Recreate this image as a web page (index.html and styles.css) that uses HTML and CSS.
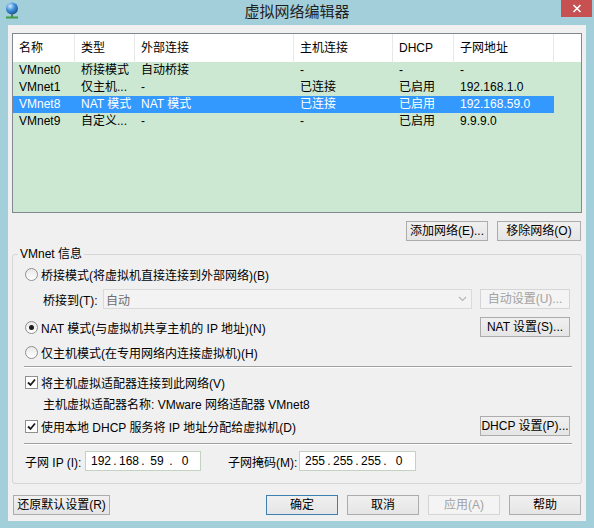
FILE: index.html
```html
<!DOCTYPE html>
<html lang="zh-CN">
	<head>
		<meta charset="utf-8">
		<link rel="stylesheet" href="styles.css">
	</head>

	<body>
		<div class="window">
			<div class="titlebar">
				<div class="tb-left">
					<svg class="app-icon" width="14" height="17" viewBox="0 0 14 17">
						<defs>
							<radialGradient id="globe" cx="0.35" cy="0.3" r="0.75">
								<stop offset="0" stop-color="#cfe8ff"/>
								<stop offset="0.5" stop-color="#3f8fd8"/>
								<stop offset="1" stop-color="#1a4f95"/>
							</radialGradient>
						</defs>
						<circle cx="7" cy="6.5" r="6" fill="url(#globe)"/>
						<rect x="6" y="12" width="2" height="3" fill="#5a7a5a"/>
						<rect x="1" y="14.5" width="12" height="2" fill="#3f9a46"/>
					</svg>
				</div>
				<div class="title">虚拟网络编辑器</div>
				<div class="tb-right">
					<div class="close">
						<svg width="10" height="9" viewBox="0 0 10 9">
							<path d="M1.5 1 L8.5 8 M8.5 1 L1.5 8" stroke="#fff" stroke-width="1.6"/>
						</svg>
					</div>
				</div>
			</div>

			<div class="client">
				<div class="netlist">
					<div class="row head">
						<div>名称</div><div>类型</div><div>外部连接</div><div>主机连接</div><div>DHCP</div><div>子网地址</div>
					</div>
					<div class="row">
						<div>VMnet0</div><div>桥接模式</div><div>自动桥接</div><div>-</div><div>-</div><div>-</div>
					</div>
					<div class="row">
						<div>VMnet1</div><div>仅主机...</div><div>-</div><div>已连接</div><div>已启用</div><div>192.168.1.0</div>
					</div>
					<div class="row selected">
						<div>VMnet8</div><div>NAT 模式</div><div>NAT 模式</div><div>已连接</div><div>已启用</div><div>192.168.59.0</div>
					</div>
					<div class="row">
						<div>VMnet9</div><div>自定义...</div><div>-</div><div>-</div><div>已启用</div><div>9.9.9.0</div>
					</div>
				</div>

				<div class="list-actions">
					<button class="btn btn-add">添加网络(E)...</button>
					<button class="btn btn-remove">移除网络(O)</button>
				</div>

				<fieldset class="info">
					<legend>VMnet 信息</legend>

					<div class="line line-bridge">
						<span class="radio"></span>
						<span class="lbl">桥接模式(将虚拟机直接连接到外部网络)(B)</span>
					</div>

					<div class="line line-bridgeto">
						<span class="bridge-lbl">桥接到(T):</span>
						<div class="combo">
							<span>自动</span>
							<svg width="9" height="6" viewBox="0 0 9 6"><path d="M1 1 L4.5 4.5 L8 1" stroke="#b5b5b5" stroke-width="1.2" fill="none"/></svg>
						</div>
						<button class="btn btn-side" disabled>自动设置(U)...</button>
					</div>

					<div class="line line-nat">
						<span class="radio checked"></span>
						<span class="lbl">NAT 模式(与虚拟机共享主机的 IP 地址)(N)</span>
						<button class="btn btn-side push">NAT 设置(S)...</button>
					</div>

					<div class="line line-host">
						<span class="radio"></span>
						<span class="lbl">仅主机模式(在专用网络内连接虚拟机)(H)</span>
					</div>

					<div class="sep sep-1"></div>

					<div class="line line-adapter">
						<span class="check"><svg width="11" height="11" viewBox="0 0 11 11"><path d="M2 5.5 L4.5 8 L9 2.5" stroke="#1a1a1a" stroke-width="1.8" fill="none"/></svg></span>
						<span class="lbl">将主机虚拟适配器连接到此网络(V)</span>
					</div>

					<div class="line line-name">
						主机虚拟适配器名称: VMware 网络适配器 VMnet8
					</div>

					<div class="line line-dhcp">
						<span class="check"><svg width="11" height="11" viewBox="0 0 11 11"><path d="M2 5.5 L4.5 8 L9 2.5" stroke="#1a1a1a" stroke-width="1.8" fill="none"/></svg></span>
						<span class="lbl">使用本地 DHCP 服务将 IP 地址分配给虚拟机(D)</span>
						<button class="btn btn-side push">DHCP 设置(P)...</button>
					</div>

					<div class="sep sep-2"></div>

					<div class="line line-ip">
						<span class="ip-lbl">子网 IP (I):</span>
						<div class="ipfield">
							<span class="oct">192</span><span class="dot">.</span><span class="oct">168</span><span class="dot">.</span><span class="oct">59</span><span class="dot">.</span><span class="oct">0</span>
						</div>
						<span class="mask-lbl">子网掩码(M):</span>
						<div class="ipfield mask">
							<span class="oct">255</span><span class="dot">.</span><span class="oct">255</span><span class="dot">.</span><span class="oct">255</span><span class="dot">.</span><span class="oct">0</span>
						</div>
					</div>
				</fieldset>

				<div class="footer">
					<button class="btn btn-restore">还原默认设置(R)</button>
					<button class="btn btn-foot btn-ok">确定</button>
					<button class="btn btn-foot">取消</button>
					<button class="btn btn-foot" disabled>应用(A)</button>
					<button class="btn btn-foot">帮助</button>
				</div>
			</div>
		</div>
	</body>
</html>
```

FILE: styles.css
```css
body {
	margin: 0;
	font-family: "Liberation Sans", "Noto Sans CJK SC", sans-serif;
	font-size: 12px;
	color: #000;
}

.window {
	width: 594px;
	height: 528px;
	box-sizing: border-box;
	background-color: #a3cfdb;
	padding: 0 8px 7px;
	display: flex;
	flex-direction: column;
}

/* title bar */

.titlebar {
	height: 25px;
	margin: 0 -8px;
	display: grid;
	grid-template-columns: 1fr auto 1fr;
}

.tb-left {
	padding: 2px 0 0 5px;
}

.title {
	font-family: "Noto Sans CJK SC", sans-serif;
	font-size: 15px;
	line-height: 22px;
	color: #1e1e1e;
}

.tb-right {
	display: flex;
	justify-content: flex-end;
	align-items: flex-start;
}

.close {
	width: 31px;
	height: 17px;
	margin-right: 2px;
	background-color: #c75050;
	display: flex;
	align-items: center;
	justify-content: center;
}

.client {
	flex: 1;
	background-color: #f0f0f0;
	padding: 0 4px;
	display: flex;
	flex-direction: column;
}

/* network list */

.netlist {
	margin-top: 8px;
	height: 180px;
	box-sizing: border-box;
	border: 1px solid #828790;
	background-color: #cde8d2;
}

.row {
	display: grid;
	grid-template-columns: 62px 60px 159px 99px 61px 100px;
	width: 541px;
	height: 17px;
	line-height: 17px;
}

.row > div {
	padding-left: 6px;
	white-space: nowrap;
}

.row.head {
	width: auto;
	height: 28px;
	background-color: #fff;
	grid-template-columns: 62px 60px 159px 99px 61px 100px 1fr;
}

.row.head > div {
	border-right: 1px solid #e8e8e8;
	line-height: 29px;
}

.row.head::after {
	content: "";
}

.row.selected {
	background-color: #3399ff;
	color: #fff;
}

/* buttons */

.btn {
	height: 20px;
	box-sizing: border-box;
	border: 1px solid #acacac;
	background: linear-gradient(#f0f0f0, #e5e5e5);
	font: inherit;
	color: #000;
	padding: 0;
	line-height: 18px;
	white-space: nowrap;
}

.btn:disabled {
	border-color: #d5d5d5;
	background: #f4f4f4;
	color: #a2a2a2;
}

.list-actions {
	display: flex;
	justify-content: flex-end;
	gap: 9px;
	margin-top: 8px;
	padding-right: 1px;
}

.btn-add {
	width: 82px;
}

.btn-remove {
	width: 84px;
}

/* VMnet info group */

.info {
	margin: 6px 0 0;
	padding: 0 11px 12px 12px;
	border: 1px solid #d6d6d6;
	border-radius: 3px;
}

.info legend {
	padding: 0 2px;
	margin-left: -7px;
	line-height: 14px;
}

.line {
	height: 20px;
	display: flex;
	align-items: center;
}

.line-bridge { margin-top: 3px; }
.line-bridgeto { margin-top: 5px; padding-left: 18px; }
.line-nat { margin-top: 8px; }
.line-host { margin-top: 5px; }
.line-adapter { margin-top: 4px; }
.line-name { margin-top: 1px; padding-left: 18px; }
.line-dhcp { margin-top: 3px; }
.line-ip { margin-top: 6px; }

.radio {
	width: 13px;
	height: 13px;
	box-sizing: border-box;
	border: 1px solid #8f8f8f;
	border-radius: 50%;
	background: linear-gradient(#e8e8e8, #ffffff);
	display: flex;
	align-items: center;
	justify-content: center;
}

.radio.checked::after {
	content: "";
	width: 5px;
	height: 5px;
	border-radius: 50%;
	background-color: #1c1c1c;
}

.check {
	width: 13px;
	height: 13px;
	box-sizing: border-box;
	border: 1px solid #8f8f8f;
	background-color: #fff;
	display: flex;
	align-items: center;
	justify-content: center;
}

.lbl {
	margin-left: 3px;
}

.bridge-lbl {
	width: 60px;
}

.combo {
	flex: 1;
	height: 20px;
	box-sizing: border-box;
	border: 1px solid #dadada;
	background-color: #f3f3f3;
	color: #6d6d6d;
	display: flex;
	align-items: center;
	justify-content: space-between;
	padding: 0 4px 0 2px;
}

.btn-side {
	width: 90px;
	margin-left: 8px;
}

.btn-side.push {
	margin-left: auto;
}

.sep {
	border-top: 1px solid #a0a0a0;
	border-bottom: 1px solid #fff;
	margin-left: -1px;
	margin-right: -2px;
}

.sep-1 { margin-top: 4px; }
.sep-2 { margin-top: 7px; }

.ip-lbl {
	width: 60px;
}

.mask-lbl {
	width: 71px;
	margin-left: 27px;
}

.ipfield {
	width: 116px;
	height: 20px;
	box-sizing: border-box;
	border: 1px solid #c2d3c2;
	background-color: #fff;
	display: flex;
	align-items: center;
	padding-left: 3px;
}

.ipfield.mask {
	width: 117px;
}

.oct {
	width: 24px;
	text-align: center;
}

.dot {
	width: 4px;
	text-align: center;
}

/* footer */

.footer {
	display: flex;
	gap: 9px;
	margin-top: 11px;
	padding: 0 1px;
}

.btn-restore {
	width: 97px;
	margin-right: auto;
}

.btn-foot {
	width: 72px;
}

.btn-ok {
	border-color: #3c7fb1;
}
```
